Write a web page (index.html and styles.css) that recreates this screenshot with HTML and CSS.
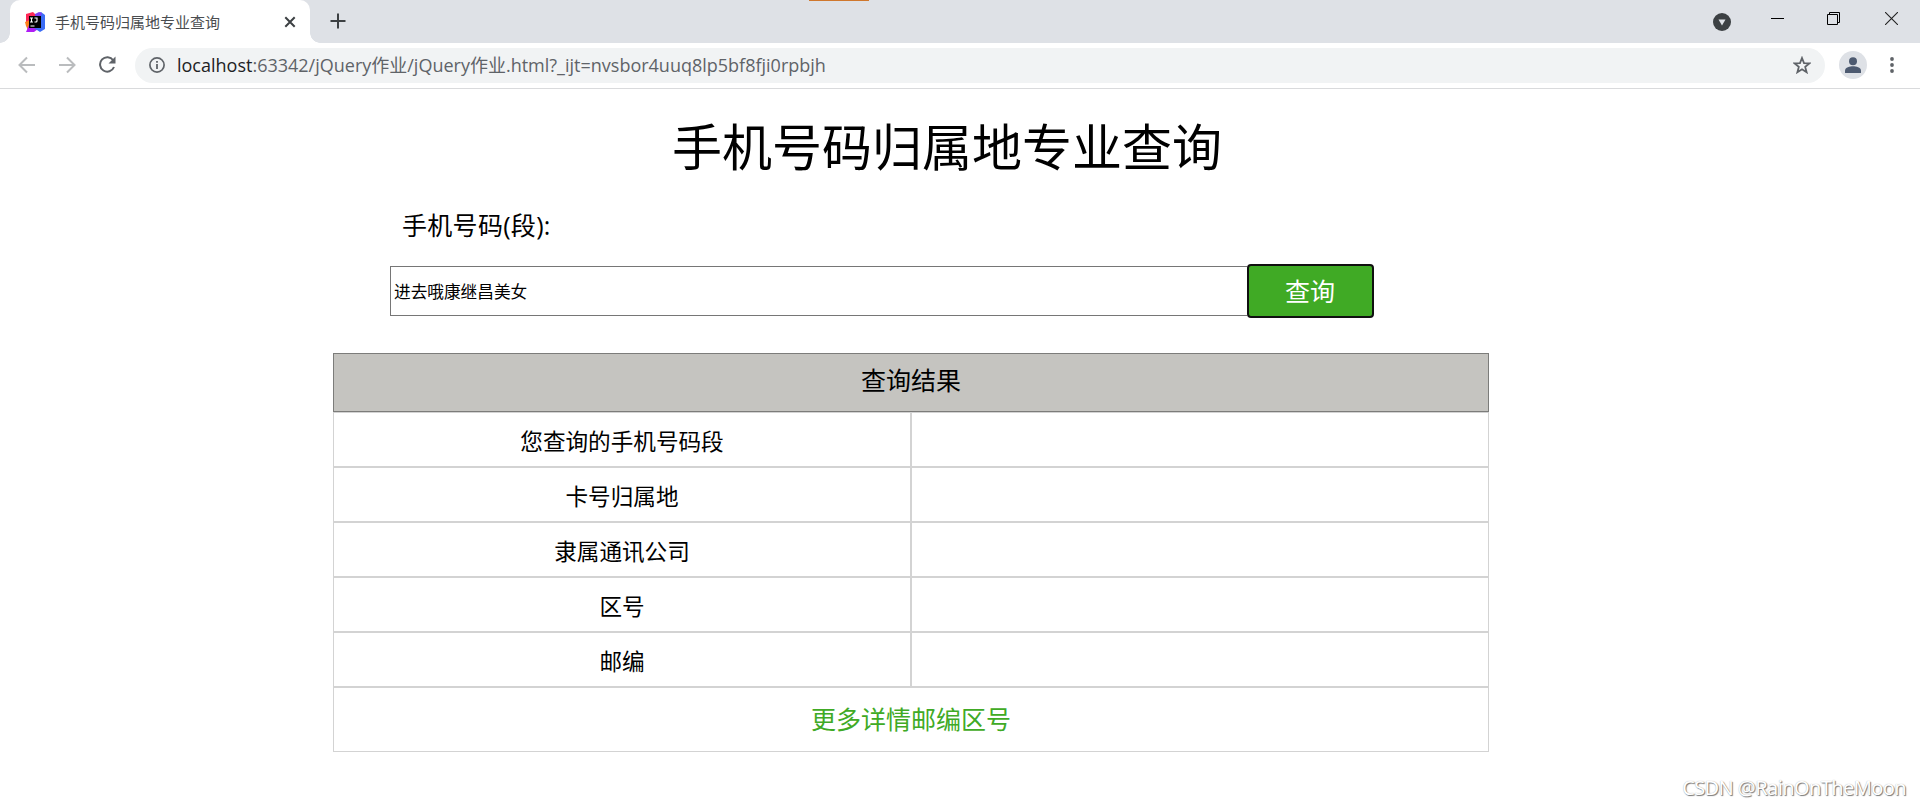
FILE: index.html
```html
<!DOCTYPE html>
<html lang="zh-CN">
<head>
    <meta charset="UTF-8">
    <meta name="viewport" content="width=device-width, initial-scale=1.0">
    <title>手机号码归属地专业查询</title>
    <link rel="stylesheet" href="styles.css">
</head>
<body>

    <header class="browser">
        <div class="tab-strip">
            <div class="tab">
                <svg class="favicon" viewBox="0 0 20 20">
                    <path d="M1 2 8 0l4 4-6 10-5-3z" fill="#fe2857"/>
                    <path d="M0 10 5 8l3 7-5 3-2-4z" fill="#fc801d"/>
                    <path d="M1 20 4 13l9 4-4 3z" fill="#af1df5"/>
                    <path d="M12 2 16 0l4 3v14l-5 3-6-4z" fill="#3b6cf5"/>
                    <path d="M10 2 14 0l3 1-2 5h-5z" fill="#7b3ff2"/>
                    <path d="M4 4h12v12H4z" fill="#000"/>
                    <path d="M5 6h3M6.500 6v4M5 10h3M9.500 6H12v3q0 1-1 1H9.500M5.500 14h4" fill="none" stroke="#fff" stroke-width="1.100"/>
                </svg>
                <span class="tab-title">手机号码归属地专业查询</span>
                <svg class="tab-close" viewBox="0 0 12 12"><path d="M1.300 1.300l9.400 9.400M10.700 1.300l-9.400 9.400" stroke="#3c4043" stroke-width="2"/></svg>
            </div>
            <svg class="new-tab" viewBox="0 0 16 16"><path d="M8 .5v15M.5 8h15" stroke="#3c4043" stroke-width="2"/></svg>
            <div class="window-buttons">
                <svg class="tab-search" viewBox="0 0 18 18"><circle cx="9" cy="9" r="9" fill="#3c4043"/><path d="M5.500 6.500h7L9 12.500z" fill="#dee1e6"/></svg>
                <svg class="minimize" viewBox="0 0 13 13"><path d="M0 6.500h13" stroke="#000"/></svg>
                <svg class="restore" viewBox="0 0 13 13"><path d="M.5 2.500h10v10H.5zM2.500 2.500v-2h10v10h-2" fill="none" stroke="#000"/></svg>
                <svg class="close" viewBox="0 0 13 13"><path d="M0 0l13 13M13 0 0 13" stroke="#222" stroke-width="1.100"/></svg>
            </div>
        </div>
        <div class="toolbar">
            <svg class="nav-icon" viewBox="0 0 18 18"><path d="M17 9H2M9 1.500 1.500 9 9 16.500" fill="none" stroke="#babcbe" stroke-width="2"/></svg>
            <svg class="nav-icon" viewBox="0 0 18 18"><path d="M1 9h15M9 1.500 16.500 9 9 16.500" fill="none" stroke="#babcbe" stroke-width="2"/></svg>
            <svg class="nav-icon" viewBox="0 0 18 18"><path d="M15.200 4.300A7.200 7.200 0 1 0 16 11" fill="none" stroke="#5f6368" stroke-width="2"/><path d="M17.500.5v7h-7z" fill="#5f6368"/></svg>
            <div class="address">
                <svg class="info" viewBox="0 0 16 16"><circle cx="8" cy="8" r="7.100" fill="none" stroke="#5f6368" stroke-width="1.700"/><path d="M8 7v5M8 4v1.700" stroke="#5f6368" stroke-width="1.800"/></svg>
                <span class="url"><span class="host">localhost</span>:63342/jQuery作业/jQuery作业.html?_ijt=nvsbor4uuq8lp5bf8fji0rpbjh</span>
                <svg class="star" viewBox="0 0 18 18"><path d="M9 2l2 5.100 5.300.3-4.100 3.500 1.400 5.300L9 13.200l-4.600 3 1.400-5.300-4.100-3.500L7 7.100z" fill="none" stroke="#5f6368" stroke-width="1.800"/></svg>
            </div>
            <svg class="avatar" viewBox="0 0 28 28"><circle cx="14" cy="14" r="14" fill="#dee1e6"/><circle cx="14" cy="10.300" r="4" fill="#4d5a70"/><path d="M6 22v-2.500c0-3 5-4.300 8-4.300s8 1.300 8 4.300V22z" fill="#4d5a70"/></svg>
            <svg class="menu" viewBox="0 0 4 16"><g fill="#5f6368"><circle cx="2" cy="2" r="1.900"/><circle cx="2" cy="8" r="1.900"/><circle cx="2" cy="14" r="1.900"/></g></svg>
        </div>
        <div class="top-mark"></div>
    </header>

    <main class="page">
        <h1 class="title">手机号码归属地专业查询</h1>
        <label class="label" for="phone">手机号码(段):</label>
        <div class="search">
            <input class="phone" id="phone" type="text" value="进去哦康继昌美女">
            <button class="query">查询</button>
        </div>
        <div class="result">
            <div class="result-head">查询结果</div>
            <div class="cell">您查询的手机号码段</div>
            <div class="cell"></div>
            <div class="cell">卡号归属地</div>
            <div class="cell"></div>
            <div class="cell">隶属通讯公司</div>
            <div class="cell"></div>
            <div class="cell">区号</div>
            <div class="cell"></div>
            <div class="cell">邮编</div>
            <div class="cell"></div>
            <div class="more">更多详情邮编区号</div>
        </div>
    </main>

    <div class="watermark">CSDN @RainOnTheMoon</div>

</body>
</html>
```

FILE: styles.css
```css
* {
    box-sizing: border-box;
}
body {
    margin: 0;
    height: 807px;
    overflow: hidden;
    position: relative;
    background-color: #fff;
    color: #000;
    font-family: "Open Sans", "Noto Sans CJK SC", sans-serif;
}
svg {
    display: block;
    flex: none;
}
/* browser */
.browser {
    height: 89px;
    border-bottom: 1px solid #d9dadc;
}
.tab-strip {
    height: 43px;
    background-color: #dee1e6;
    display: flex;
    padding-left: 10px;
}
.tab {
    position: relative;
    width: 300px;
    height: 43px;
    padding: 0 14px 0 15px;
    display: flex;
    align-items: center;
    background-color: #fff;
    border-radius: 10px 10px 0 0;
}
.tab::before,
.tab::after {
    content: "";
    position: absolute;
    bottom: 0;
    width: 10px;
    height: 10px;
}
.tab::before {
    left: -10px;
    background: radial-gradient(circle at 0 0, #dee1e6 9.5px, #fff 10px);
}
.tab::after {
    right: -10px;
    background: radial-gradient(circle at 100% 0, #dee1e6 9.5px, #fff 10px);
}
.favicon {
    width: 20px;
    height: 20px;
}
.tab-title {
    margin-left: 10px;
    font-family: "Noto Sans CJK SC", sans-serif;
    font-size: 15px;
    line-height: 20px;
    color: #4a4d50;
}
.tab-close {
    width: 12px;
    height: 12px;
    margin-left: auto;
}
.new-tab {
    width: 16px;
    height: 16px;
    margin: 13px 0 0 20px;
}
.window-buttons {
    display: flex;
    margin: 12px 22px 0 auto;
}
.tab-search {
    width: 18px;
    height: 18px;
    margin-top: 1px;
}
.minimize,
.restore,
.close {
    width: 13px;
    height: 13px;
}
.minimize {
    margin-left: 40px;
}
.restore {
    margin-left: 43px;
}
.close {
    margin-left: 45px;
}
.toolbar {
    height: 45px;
    padding: 5px 26px 6px 18px;
    display: flex;
    align-items: center;
}
.nav-icon {
    width: 18px;
    height: 18px;
    margin-right: 22px;
}
.address {
    width: 1690px;
    height: 35px;
    margin-left: -3px;
    padding: 0 14px;
    display: flex;
    align-items: center;
    border-radius: 18px;
    background-color: #f1f3f4;
}
.info {
    width: 16px;
    height: 16px;
}
.url {
    margin-left: 12px;
    font-size: 18px;
    line-height: 26px;
    white-space: nowrap;
    color: #5f6368;
}
.host {
    color: #202124;
}
.star {
    width: 18px;
    height: 18px;
    margin-left: auto;
}
.avatar {
    width: 28px;
    height: 28px;
    margin-left: 14px;
}
.menu {
    width: 4px;
    height: 16px;
    margin-left: auto;
}
.top-mark {
    position: absolute;
    top: 0;
    left: 809px;
    width: 60px;
    height: 1px;
    background-color: #cf772d;
}
/* page */
.page {
    padding-left: 333px;
    font-family: "Noto Sans CJK SC", sans-serif;
}
.title {
    width: 550px;
    margin: 17px 0 0 339px;
    font-size: 50px;
    line-height: 76px;
    font-weight: 400;
    white-space: nowrap;
}
.label {
    display: block;
    margin: 25px 0 0 69px;
    font-family: "Open Sans", "Noto Sans CJK SC", sans-serif;
    font-size: 25px;
    line-height: 36px;
    letter-spacing: 0.3px;
}
.search {
    display: flex;
    align-items: center;
    height: 54px;
    margin: 21px 0 0 57px;
}
.phone {
    width: 857px;
    height: 50px;
    padding: 0 3px 1px;
    border: 1px solid #767676;
    border-right: none;
    font-family: "Noto Sans CJK SC", sans-serif;
    font-size: 16.67px;
}
.query {
    width: 127px;
    height: 54px;
    padding: 0 1px 2px 0;
    border: 2px solid #101010;
    border-radius: 4px;
    background-color: #40aa25;
    color: #fff;
    font-family: "Noto Sans CJK SC", sans-serif;
    font-size: 25px;
    line-height: 48px;
}
.result {
    width: 1156px;
    margin-top: 35px;
    display: grid;
    grid-template-columns: 1fr 1fr;
    text-align: center;
}
.result-head {
    grid-column: span 2;
    height: 59px;
    border: 1px solid #7c7c7a;
    background-color: #c5c4c0;
    font-size: 25px;
    line-height: 51px;
}
.cell {
    height: 55px;
    border: 1px solid #d3d3d3;
    font-size: 22.6px;
    line-height: 55px;
}
.more {
    grid-column: span 2;
    height: 65px;
    border: 1px solid #d3d3d3;
    color: #40aa25;
    font-size: 25px;
    line-height: 60px;
}
.watermark {
    position: absolute;
    right: 14px;
    bottom: 5px;
    font-family: "Noto Sans", sans-serif;
    font-size: 20px;
    line-height: 28px;
    letter-spacing: -0.6px;
    color: #fff;
    text-shadow: 1px 1px 1px #777, 0 0 1px #aaa;
}
```
